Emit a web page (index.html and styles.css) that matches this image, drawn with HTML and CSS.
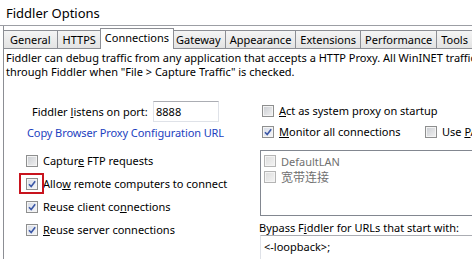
FILE: index.html
```html
<!DOCTYPE html>
<html lang="en">
<head>
  <meta charset="UTF-8" />
  <title>Fiddler Options</title>
  <link rel="stylesheet" href="styles.css">
</head>
<body>

<div class="window">
  <div class="titlebar">Fiddler Options</div>

  <div class="client">
    <!-- tab strip -->
    <div class="tabs">
      <div class="tab wide">General</div>
      <div class="tab wide">HTTPS</div>
      <div class="tab active">Connections</div>
      <div class="tab">Gateway</div>
      <div class="tab">Appearance</div>
      <div class="tab">Extensions</div>
      <div class="tab">Performance</div>
      <div class="tab">Tools</div>
    </div>

    <!-- Connections page -->
    <div class="panel">
      <p class="intro">Fiddler can debug traffic from any application that accepts a HTTP Proxy. All WinINET traffic is routed<br>through Fiddler when "File &gt; Capture Traffic" is checked.</p>

      <div class="columns">
        <div class="col-left">
          <div class="port-row">
            <span class="port-label">Fiddler <u>l</u>istens on port:</span>
            <div class="textbox port">8888</div>
          </div>
          <a class="link">Copy Browser Proxy Configuration URL</a>

          <label class="check first"><span class="box"></span><span>Captur<u>e</u> FTP requests</span></label>
          <label class="check">
            <span class="box on"><svg viewBox="0 0 10 10"><path d="M2 5.2 L4.2 7.6 L8.2 2.2"/></svg></span><span>Allo<u>w</u> remote computers to connect</span>
            <span class="annotation"></span>
          </label>
          <label class="check"><span class="box on"><svg viewBox="0 0 10 10"><path d="M2 5.2 L4.2 7.6 L8.2 2.2"/></svg></span><span>Reuse client co<u>n</u>nections</span></label>
          <label class="check"><span class="box on"><svg viewBox="0 0 10 10"><path d="M2 5.2 L4.2 7.6 L8.2 2.2"/></svg></span><span><u>R</u>euse server connections</span></label>
        </div>

        <div class="col-right">
          <label class="check short"><span class="box"></span><span><u>A</u>ct as system proxy on startup</span></label>
          <div class="monitor-row">
            <label class="check short monitor"><span class="box on"><svg viewBox="0 0 10 10"><path d="M2 5.2 L4.2 7.6 L8.2 2.2"/></svg></span><span><u>M</u>onitor all connections</span></label>
            <label class="check short"><span class="box"></span><span>Use <u>P</u>AC Script</span></label>
          </div>

          <div class="listbox">
            <div class="list-item"><span class="box dim"></span><span>DefaultLAN</span></div>
            <div class="list-item"><span class="box dim"></span><span class="cjk">宽带连接</span></div>
          </div>

          <div class="bypass-label">Bypass F<u>i</u>ddler for URLs that start with:</div>
          <div class="textbox bypass">&lt;-loopback&gt;;</div>
        </div>
      </div>
    </div>
  </div>
</div>

</body>
</html>
```

FILE: styles.css
```css
body {
  margin: 0;
  padding: 0;
  background: #fff;
  color: #000;
  font-family: "Noto Sans", "Noto Sans CJK SC", sans-serif;
  font-size: 11px;
  overflow: hidden;
}

.window {
  width: 600px;
  height: 259px;
}

.titlebar {
  height: 25px;
  padding-left: 6px;
  font-size: 13px;
  line-height: 27px;
  border-bottom: 1px solid #9c9ea4;
}

.client {
  margin-left: 3px;
  border-left: 1px solid #8c8e94;
  height: 233px;
}

/* tabs */
.tabs {
  display: flex;
  align-items: flex-end;
  height: 22px;
}
.tab {
  box-sizing: border-box;
  height: 18px;
  margin-left: -1px;
  padding: 0 4px;
  line-height: 18px;
  border: 1px solid #8c8e94;
  border-bottom: none;
  background: linear-gradient(#f4f4f4, #e3e3e3);
  white-space: nowrap;
}
.tab.wide {
  padding: 0 5px;
}
.tab.wide:first-child {
  padding: 0 6px;
}
.tab.active {
  height: 21px;
  margin-bottom: -1px;
  margin-left: -2px;
  margin-right: -2px;
  padding: 0 4px 4px;
  line-height: 17px;
  background: #fff;
  position: relative;
  z-index: 1;
}

.panel {
  border-top: 1px solid #8c8e94;
  padding: 2px 0 0 2px;
}

.intro {
  margin: 0;
  line-height: 14px;
  white-space: nowrap;
}

.columns {
  display: grid;
  grid-template-columns: 253px auto;
  margin-top: 21px;
}

.col-left {
  padding-left: 20px;
}

.port-row {
  display: flex;
  align-items: center;
  height: 21px;
  margin-top: 1px;
  padding-left: 6px;
}
.port-label {
  width: 121px;
  white-space: nowrap;
}

.textbox {
  box-sizing: border-box;
  border: 1px solid #dfe2e8;
  border-top-color: #abadb3;
  background: #fff;
}
.port {
  width: 66px;
  height: 21px;
  padding-left: 2px;
  line-height: 19px;
}

.link {
  display: block;
  margin-top: 3px;
  padding-left: 1px;
  line-height: 16px;
  color: #1c3fc0;
  white-space: nowrap;
  letter-spacing: -0.1px;
}

.check {
  display: flex;
  align-items: center;
  height: 23px;
  white-space: nowrap;
  position: relative;
}
.check.short {
  height: 21px;
}
.check.first {
  margin-top: 8px;
}

.box {
  box-sizing: border-box;
  flex: none;
  width: 12px;
  height: 12px;
  margin-right: 5px;
  border: 1px solid #8e8f8f;
  background: linear-gradient(135deg, #c9ccd1, #f2f2f2);
  box-shadow: inset 0 0 0 1px #f4f4f4;
}
.box.on {
  background: linear-gradient(135deg, #d6dbe6, #f6f7fa);
}
.box svg {
  display: block;
  width: 10px;
  height: 10px;
}
.box path {
  fill: none;
  stroke: #3b57a6;
  stroke-width: 1.6;
}
.box.dim {
  border-color: #b4b4b4;
  background: linear-gradient(135deg, #dcdcdc, #f4f4f4);
}

.annotation {
  position: absolute;
  left: -7px;
  top: 1px;
  width: 25px;
  height: 21px;
  box-sizing: border-box;
  border: 2px solid #c8141e;
}

.col-right {
  padding-left: 3px;
}
.monitor-row {
  display: flex;
}
.monitor {
  width: 163px;
}

.listbox {
  box-sizing: border-box;
  height: 66px;
  margin: 8px 0 0 -2px;
  padding: 2px 0 0 3px;
  border: 1px solid #828790;
  color: #707070;
}
.list-item {
  display: flex;
  align-items: center;
  height: 16px;
  white-space: nowrap;
}
.list-item .box {
  margin-right: 5px;
}
.cjk {
  font-size: 12px;
}

.bypass-label {
  margin: 5px 0 0 -3px;
  line-height: 14px;
  white-space: nowrap;
}

.bypass {
  height: 30px;
  margin-left: -2px;
  padding: 3px 0 0 3px;
  line-height: 16px;
}
```
